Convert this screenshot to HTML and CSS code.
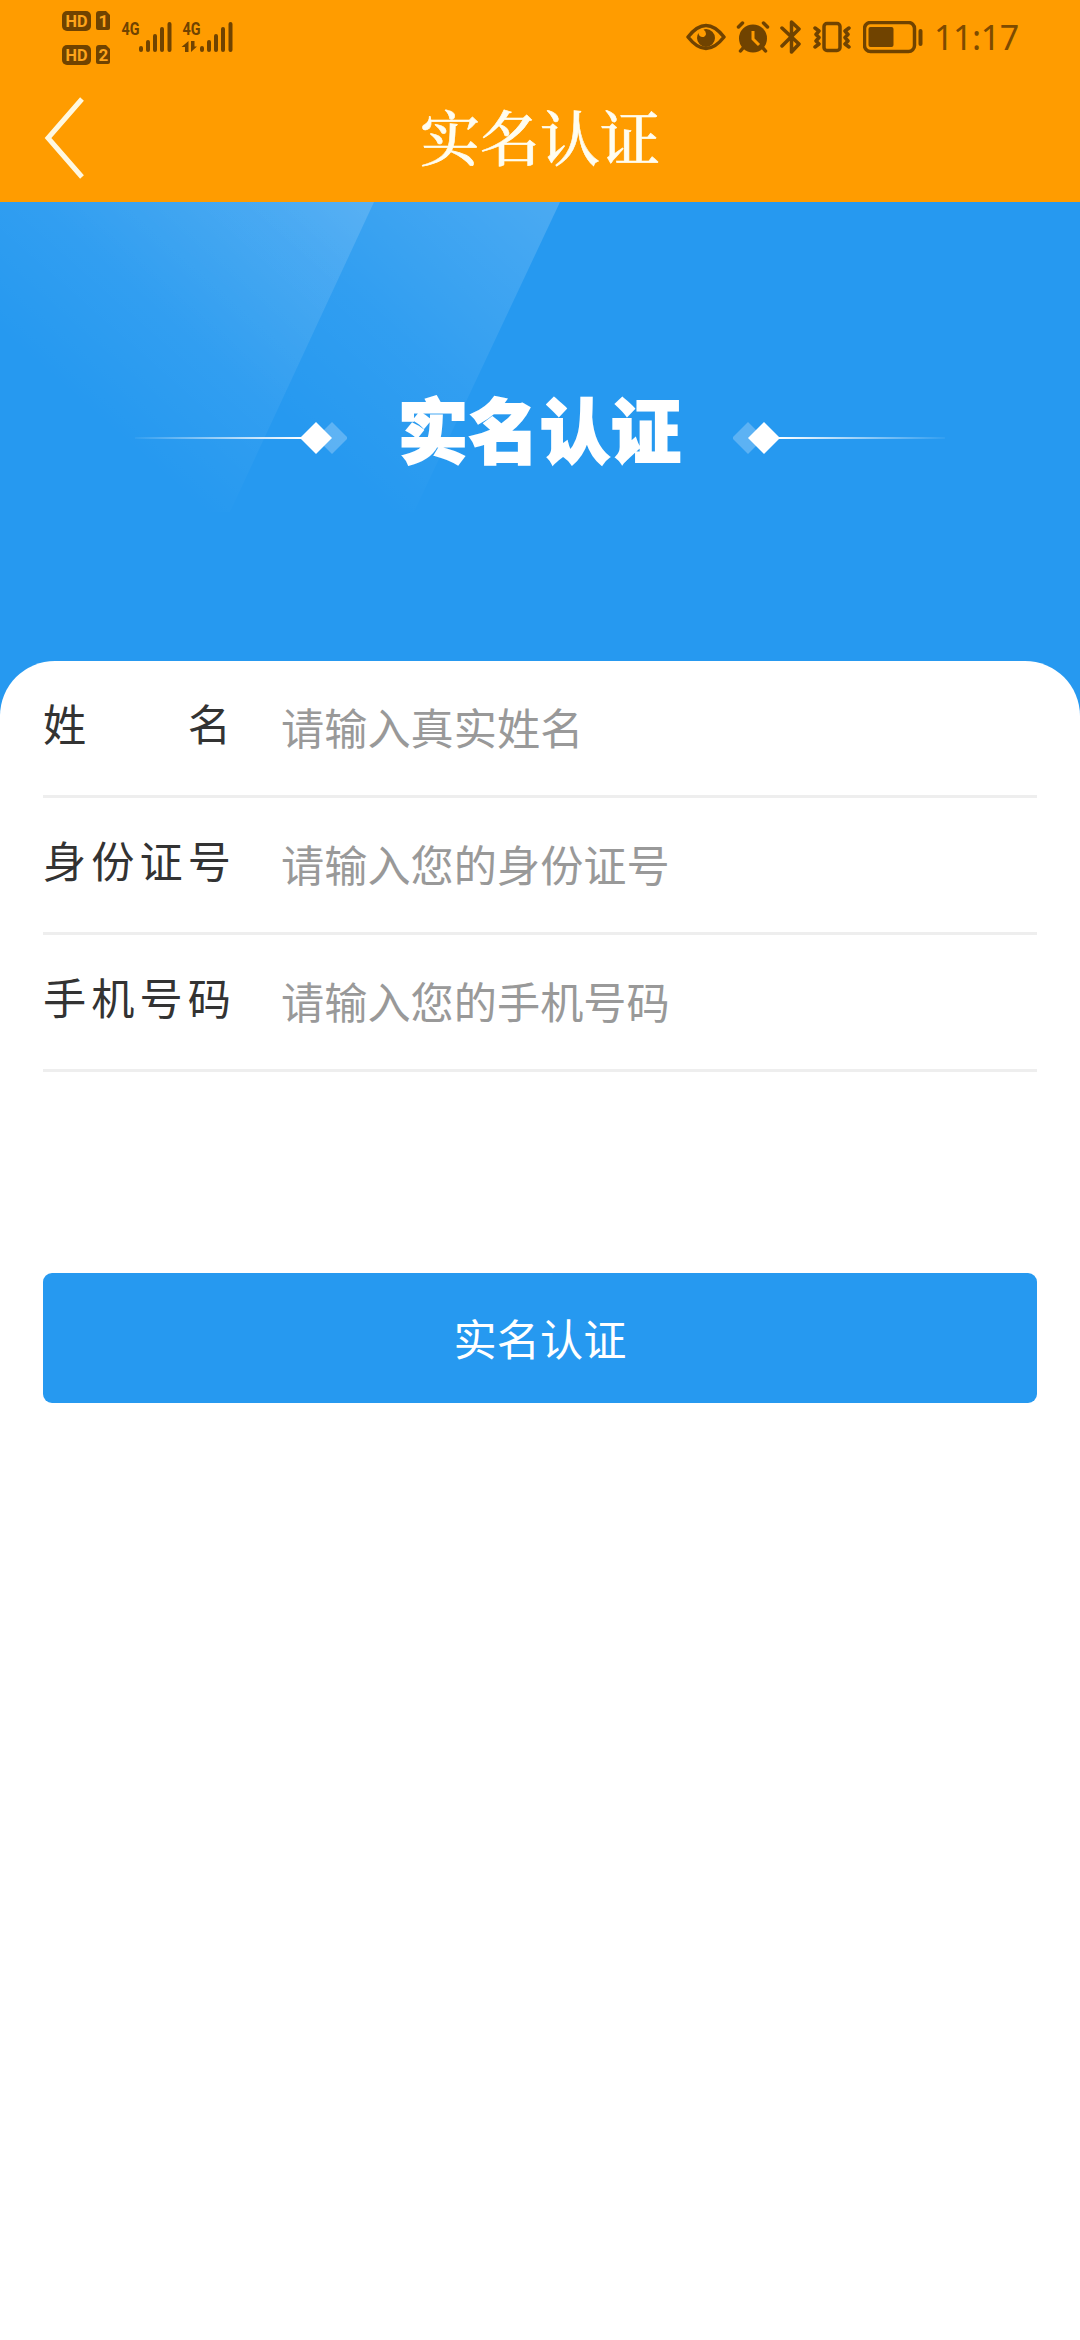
FILE: index.html
```html
<!DOCTYPE html>
<html lang="zh-CN">
<head>
  <meta charset="UTF-8" />
  <meta name="viewport" content="width=device-width, initial-scale=1.0"/>
  <title>实名认证</title>
  <link rel="stylesheet" href="styles.css">
</head>
<body>

<header>
  <div class="status">
    <svg class="sim" width="172" height="74" viewBox="62 0 172 74">
      <!-- HD 1 / HD 2 -->
      <rect x="62" y="11" width="29" height="20" rx="5"/>
      <path d="M99 11h7l4 4v13q0 2-2 2H98q-2 0-2-2V14q0-3 3-3z"/>
      <rect x="62" y="45" width="29" height="20" rx="5"/>
      <path d="M99 45h7l4 4v13q0 2-2 2H98q-2 0-2-2V48q0-3 3-3z"/>
      <g class="sim-label">
        <text x="65.500" y="27" textLength="22" lengthAdjust="spacingAndGlyphs">HD</text>
        <text x="98.500" y="27">1</text>
        <text x="65.500" y="61" textLength="22" lengthAdjust="spacingAndGlyphs">HD</text>
        <text x="98.500" y="61">2</text>
      </g>
      <g class="net-label">
        <text x="121.500" y="35" textLength="18" lengthAdjust="spacingAndGlyphs">4G</text>
        <text x="182.500" y="35" textLength="18" lengthAdjust="spacingAndGlyphs">4G</text>
      </g>
      <g class="bars">
        <path d="M141 48v2M148 42v8M155 36v14M162 29v21M169.500 24v26"/>
        <path d="M202 48v2M209 42v8M216 36v14M223 29v21M230.500 24v26"/>
      </g>
      <path d="M188.500 41v11H185v-5h-3.500zM191 41v11l6-5.500h-2.500V41z"/>
    </svg>

    <div class="status-right">
      <svg width="40" height="30" viewBox="0 0 40 30">
        <path class="line" d="M2 15Q11 3.500 20 3.500T38 15Q29 26.500 20 26.500T2 15z"/>
        <path d="M20 7a9 9 0 1 1-9 9q0-3 1.500-5c0 5 7 5.500 7.500 1q0-3-2.500-4.500Q19 7 20 7z"/>
      </svg>
      <svg class="alarm" width="34" height="32" viewBox="0 0 34 32">
        <circle cx="17" cy="17.500" r="14"/>
        <path class="line" d="M2.500 6l4-4M31.500 6l-4-4M7 27l-2.500 3M27 27l2.500 3"/>
        <path class="hand" d="M17 10v8l6 6"/>
      </svg>
      <svg class="bluetooth" width="22" height="36" viewBox="0 0 22 36">
        <path class="line" d="M2 9l17 16-7.500 8V3l7.500 7L2 27"/>
      </svg>
      <svg class="vibrate" width="38" height="32" viewBox="0 0 38 32">
        <rect class="line" x="11" y="2.500" width="16" height="27" rx="3"/>
        <path class="line" d="M2 7l4 3-3 3.500 3 3-3 3.500 3 3-4 3M36 7l-4 3 3 3.500-3 3 3 3.500-3 3 4 3"/>
      </svg>
      <svg class="battery" width="60" height="33" viewBox="0 0 60 33">
        <rect class="line" x="1.500" y="1.500" width="50" height="29" rx="6"/>
        <rect x="5.500" y="6" width="25" height="20" rx="2"/>
        <rect x="55.500" y="8" width="4" height="17" rx="2"/>
      </svg>
      <span class="time">11:17</span>
    </div>
  </div>

  <div class="navbar">
    <button class="back" aria-label="返回">
      <svg width="42" height="84" viewBox="0 0 42 84">
        <path d="M38 3L4 42l34 39"/>
      </svg>
    </button>
    <h1>实名认证</h1>
  </div>
</header>

<section class="banner">
  <svg class="shine" width="1080" height="514" viewBox="0 0 1080 514">
    <defs>
      <linearGradient id="ray1" gradientUnits="userSpaceOnUse" x1="374" y1="0" x2="145" y2="260">
        <stop offset="0" stop-color="#fff" stop-opacity=".15"/>
        <stop offset="1" stop-color="#fff" stop-opacity="0"/>
      </linearGradient>
      <linearGradient id="ray2" gradientUnits="userSpaceOnUse" x1="560" y1="0" x2="330" y2="260">
        <stop offset="0" stop-color="#fff" stop-opacity=".17"/>
        <stop offset=".6" stop-color="#fff" stop-opacity=".05"/>
        <stop offset="1" stop-color="#fff" stop-opacity="0"/>
      </linearGradient>
    </defs>
    <path fill="url(#ray1)" d="M0 0h374L230 310H0z"/>
    <path fill="url(#ray2)" d="M0 0h560L414 310H0z"/>
  </svg>
  <div class="banner-title">
    <svg width="212" height="34" viewBox="0 0 212 34">
      <defs>
        <linearGradient id="fade">
          <stop offset="0" stop-color="#fff" stop-opacity=".05"/>
          <stop offset="1" stop-color="#fff"/>
        </linearGradient>
      </defs>
      <rect x="0" y="16" width="166" height="2" fill="url(#fade)"/>
      <path fill="#fff" opacity=".25" d="M197 1l16 16-16 16-16-16z"/>
      <path fill="#fff" d="M181 1l16 16-16 16-16-16z"/>
    </svg>
    <h2>实名认证</h2>
    <svg class="flip" width="212" height="34" viewBox="0 0 212 34">
      <rect x="0" y="16" width="166" height="2" fill="url(#fade)"/>
      <path fill="#fff" opacity=".25" d="M197 1l16 16-16 16-16-16z"/>
      <path fill="#fff" d="M181 1l16 16-16 16-16-16z"/>
    </svg>
  </div>
</section>

<form class="card">
  <div class="row">
    <label for="name"><span>姓</span><span>名</span></label>
    <input id="name" type="text" placeholder="请输入真实姓名">
  </div>
  <div class="row">
    <label for="idcard"><span>身</span><span>份</span><span>证</span><span>号</span></label>
    <input id="idcard" type="text" placeholder="请输入您的身份证号">
  </div>
  <div class="row">
    <label for="phone"><span>手</span><span>机</span><span>号</span><span>码</span></label>
    <input id="phone" type="tel" placeholder="请输入您的手机号码">
  </div>
  <button class="submit" type="button">实名认证</button>
</form>

</body>
</html>
```

FILE: styles.css
```css
* {
  box-sizing: border-box;
  margin: 0;
  padding: 0;
}

body {
  font-family: "Noto Sans CJK SC", sans-serif;
  background: #fff;
  color: #333;
  min-height: 2340px;
}

svg {
  display: block;
  flex: none;
}

header {
  background: #ff9c00;
  height: 202px;
}

/* status bar */
.status {
  height: 74px;
  padding: 0 62px;
  display: flex;
  justify-content: space-between;
  fill: #704300;
}

.sim-label {
  fill: #ffa51a;
  font: bold 17px Roboto, sans-serif;
}

.net-label {
  font: bold 19px Roboto, sans-serif;
}

.bars {
  stroke: #704300;
  stroke-width: 4;
  stroke-linecap: round;
}

.status-right {
  display: flex;
  align-items: center;
}

.line {
  fill: none;
  stroke: #704300;
  stroke-width: 3.5;
  stroke-linecap: round;
  stroke-linejoin: round;
}

.hand {
  fill: none;
  stroke: #ff9c00;
  stroke-width: 3;
}

.alarm {
  margin-left: 10px;
}

.bluetooth {
  margin-left: 10px;
}

.vibrate {
  margin-left: 11px;
}

.battery {
  margin-left: 12px;
}

.time {
  width: 84px;
  margin-left: 11px;
  font: 34px/76px "Noto Sans", sans-serif;
  letter-spacing: -0.4px;
  color: #7d4b00;
  white-space: nowrap;
}

/* title bar */
.navbar {
  height: 128px;
  display: grid;
  grid-template-columns: 1fr auto 1fr;
  align-items: center;
}

.back {
  justify-self: start;
  margin-left: 44px;
  background: none;
  border: none;
}

.back path {
  fill: none;
  stroke: #fff8e0;
  stroke-width: 5;
}

h1 {
  padding-bottom: 6px;
  font: 500 60px/80px "Noto Serif CJK SC", "Noto Sans CJK SC", serif;
  -webkit-text-stroke: 0.6px #fffdf0;
  color: #fffdf0;
}

/* banner */
.banner {
  height: 514px;
  background: #2699f0;
  position: relative;
}

.shine {
  position: absolute;
  top: 0;
  left: 0;
}

.banner-title {
  position: relative;
  padding-top: 176px;
  display: flex;
  justify-content: center;
  align-items: center;
}

.banner-title h2 {
  width: 386px;
  padding-bottom: 20px;
  text-align: center;
  font-size: 70px;
  line-height: 100px;
  font-weight: 900;
  letter-spacing: 1px;
  -webkit-text-stroke: 2px #fff;
  color: #fff;
}

.flip {
  transform: scaleX(-1);
}

/* form */
.card {
  position: relative;
  margin-top: -55px;
  padding: 0 43px;
  background: #fff;
  border-radius: 55px 55px 0 0;
}

.row {
  height: 137px;
  display: flex;
  border-bottom: 3px solid #eee;
}

.row label {
  width: 188px;
  height: 128px;
  display: flex;
  justify-content: space-between;
  font-size: 43.2px;
  line-height: 123px;
  color: #333;
}

.row input {
  flex: 1;
  height: 129px;
  margin-left: 50px;
  border: none;
  outline: none;
  background: none;
  font: 43.2px "Noto Sans CJK SC", sans-serif;
  color: #333;
}

.row input::placeholder {
  color: #999;
}

.submit {
  display: block;
  width: 100%;
  height: 130px;
  margin-top: 201px;
  padding-bottom: 2px;
  border: none;
  border-radius: 9px;
  background: #2699f0;
  color: #fff;
  font: 43.2px "Noto Sans CJK SC", sans-serif;
}
```
